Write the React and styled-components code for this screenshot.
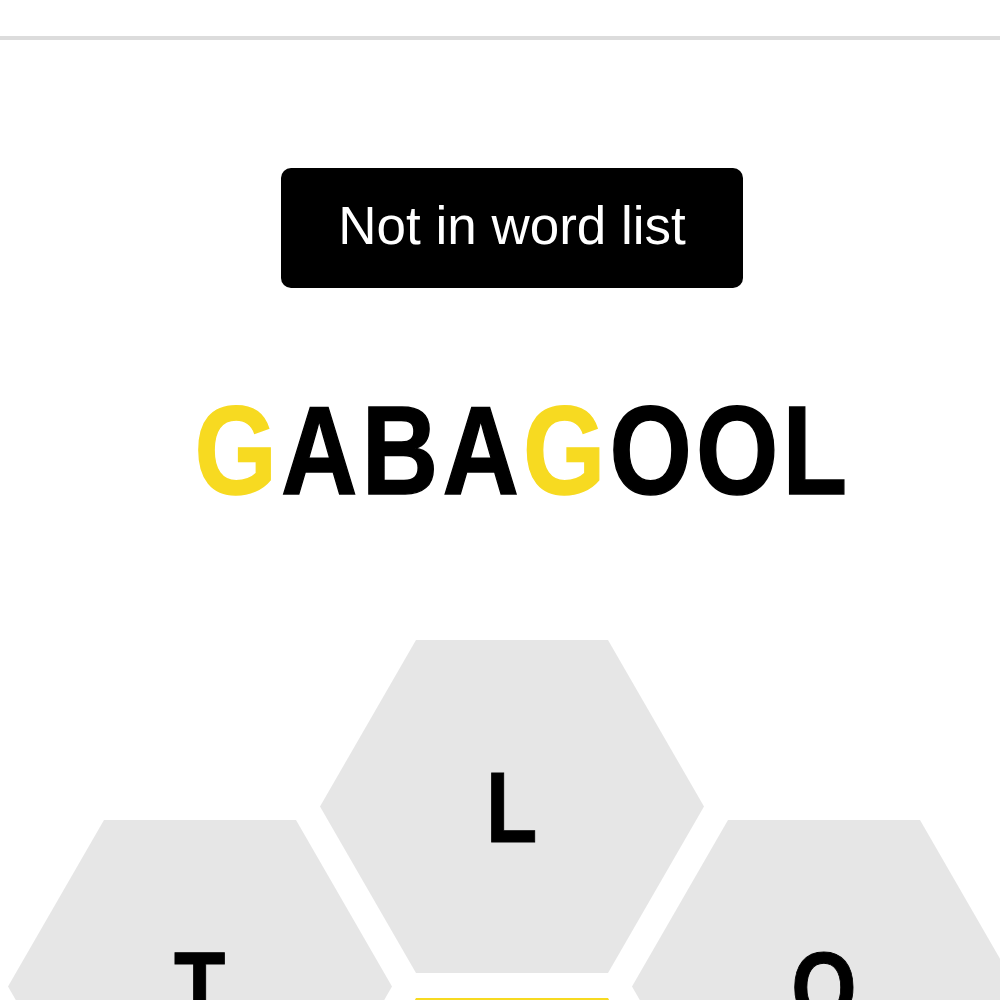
import React from "react";
import styled, { createGlobalStyle } from "styled-components";

const Global = createGlobalStyle`
  html, body { margin: 0; padding: 0; background: #ffffff; }
  body { overflow: hidden; font-family: "Liberation Sans", Arial, sans-serif; }
`;

const Page = styled.div`
  width: 1000px;
  height: 1000px;
  overflow: hidden;
  display: flex;
  flex-direction: column;
`;

const Header = styled.header`
  height: 36px;
  flex: none;
  border-bottom: 4px solid #dcdcdc;
`;

const Main = styled.main`
  display: flex;
  flex-direction: column;
  align-items: center;
  padding-left: 24px;
`;

const Toast = styled.div`
  margin-top: 128px;
  height: 120px;
  box-sizing: border-box;
  padding: 0 57px 6px;
  display: flex;
  align-items: center;
  background: #000000;
  color: #ffffff;
  border-radius: 10px;
  font-size: 53px;
  line-height: 1;
  white-space: nowrap;
`;

const Word = styled.div`
  margin-top: 100px;
  margin-left: 22px;
  font-size: 126px;
  line-height: 1;
  font-weight: 700;
  letter-spacing: 5px;
  color: #000000;
  white-space: nowrap;
  transform: scaleX(0.84);
`;

const WordLetter = styled.span`
  color: ${(p) => (p.$center ? "#f7da21" : "#000000")};
  -webkit-text-stroke: 1.5px currentColor;
`;

const Hive = styled.div`
  position: relative;
  flex: none;
  margin-top: 126px;
  width: 1008px;
  height: 900px;
`;

const Cell = styled.div`
  position: absolute;
  left: ${(p) => p.$x}px;
  top: ${(p) => p.$y}px;
  width: 384px;
  height: 333px;
  clip-path: polygon(25% 0, 75% 0, 100% 50%, 75% 100%, 25% 100%, 0 50%);
  background: ${(p) => (p.$center ? "#f7da21" : "#e6e6e6")};
  display: flex;
  align-items: center;
  justify-content: center;
`;

const CellLetter = styled.span`
  font-size: 100px;
  line-height: 1;
  font-weight: 700;
  color: #000000;
  transform: scaleX(0.84);
  -webkit-text-stroke: 1px currentColor;
`;

const word = "GABAGOOL";
const center = "G";

const cells = [
  { l: "L", x: 312, y: 0 },
  { l: "T", x: 0, y: 180 },
  { l: "O", x: 624, y: 180 },
  { l: "G", x: 312, y: 358, c: true },
  { l: "A", x: 0, y: 538 },
  { l: "B", x: 624, y: 538 },
  { l: "E", x: 312, y: 716 },
];

export default function App() {
  return (
    <>
      <Global />
      <Page>
        <Header />
        <Main>
          <Toast>Not in word list</Toast>
          <Word>
            {word.split("").map((ch, i) => (
              <WordLetter key={i} $center={ch === center}>
                {ch}
              </WordLetter>
            ))}
          </Word>
          <Hive>
            {cells.map((c, i) => (
              <Cell key={i} $x={c.x} $y={c.y} $center={c.c}>
                <CellLetter>{c.l}</CellLetter>
              </Cell>
            ))}
          </Hive>
        </Main>
      </Page>
    </>
  );
}
